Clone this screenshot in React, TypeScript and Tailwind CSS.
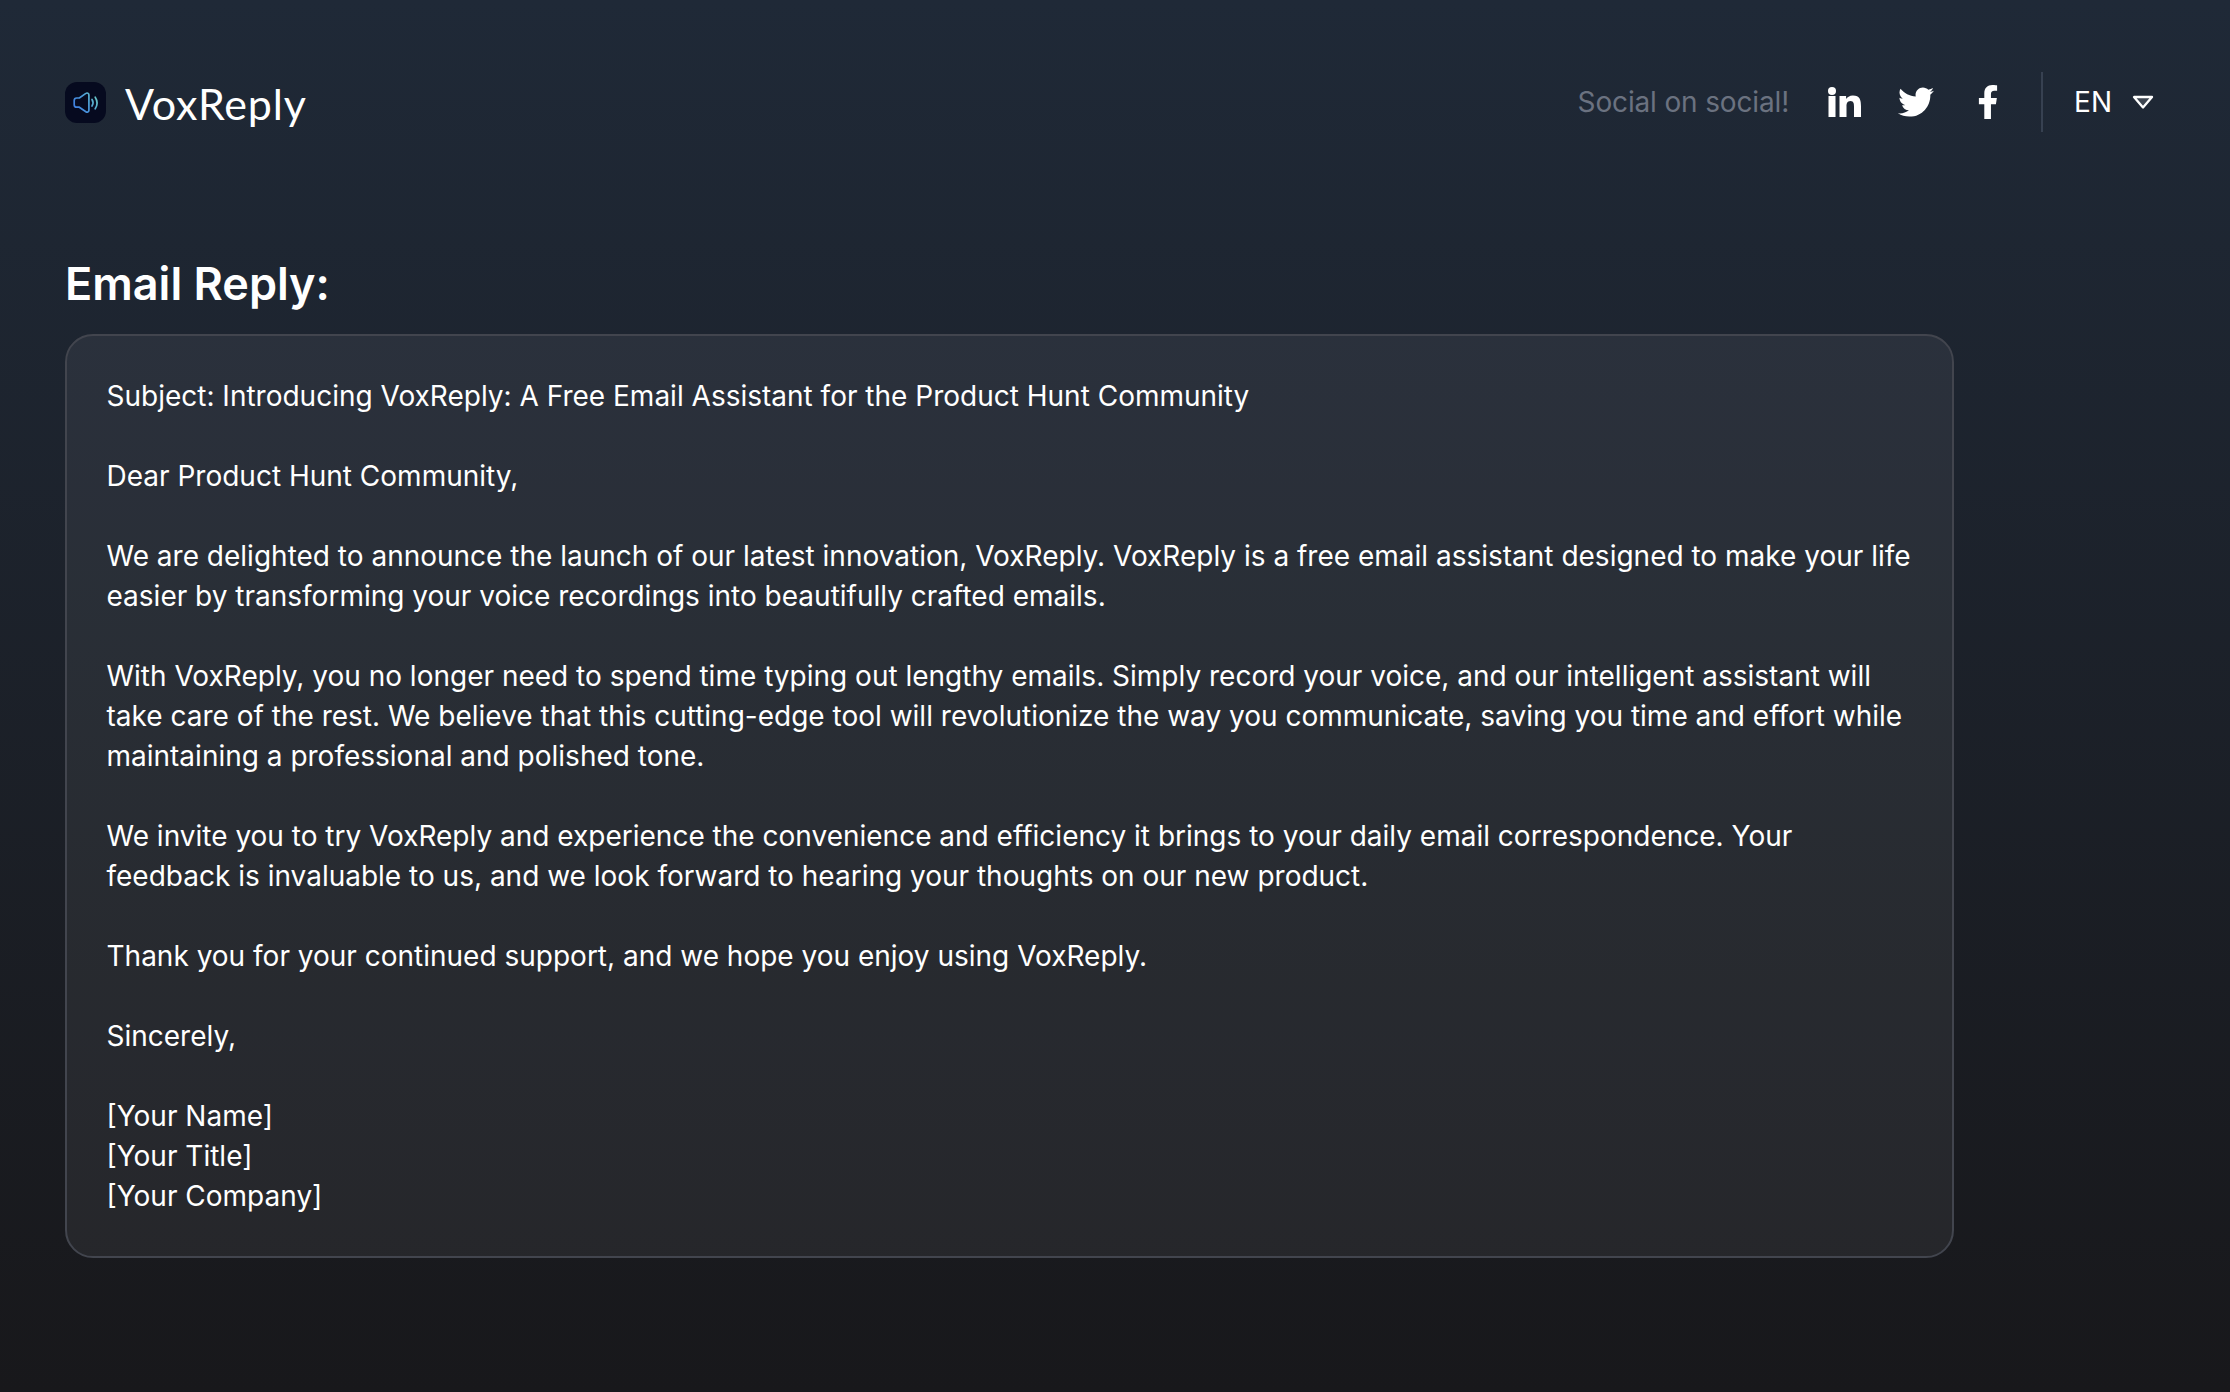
import { FaTwitter, FaFacebookF } from "react-icons/fa";

const paragraphs = `Subject: Introducing VoxReply: A Free Email Assistant for the Product Hunt Community

Dear Product Hunt Community,

We are delighted to announce the launch of our latest innovation, VoxReply. VoxReply is a free email assistant designed to make your life easier by transforming your voice recordings into beautifully crafted emails.

With VoxReply, you no longer need to spend time typing out lengthy emails. Simply record your voice, and our intelligent assistant will take care of the rest. We believe that this cutting-edge tool will revolutionize the way you communicate, saving you time and effort while maintaining a professional and polished tone.

We invite you to try VoxReply and experience the convenience and efficiency it brings to your daily email correspondence. Your feedback is invaluable to us, and we look forward to hearing your thoughts on our new product.

Thank you for your continued support, and we hope you enjoy using VoxReply.

Sincerely,

[Your Name]
[Your Title]
[Your Company]`;

function LogoMark() {
  return (
    <div className="flex h-[41px] w-[41px] items-center justify-center rounded-[12px] bg-[#060a1f]">
      <svg width="41" height="41" viewBox="0 0 41 41" fill="none">
        <defs>
          <linearGradient id="spk" x1="8" y1="28" x2="33" y2="14" gradientUnits="userSpaceOnUse">
            <stop offset="0" stopColor="#3d79e0" />
            <stop offset="0.55" stopColor="#4c9bd8" />
            <stop offset="1" stopColor="#6fd0c4" />
          </linearGradient>
        </defs>
        <path
          d="M9.2 18.5c0-1.5 1-2.5 2.5-2.5h2.6l6.6-4.6c1.2-.9 3-.2 3 1.5v15.4c0 1.7-1.8 2.4-3 1.5l-6.6-4.6h-2.6c-1.5 0-2.5-1-2.5-2.5z"
          stroke="url(#spk)"
          strokeWidth="1.7"
          strokeLinejoin="round"
        />
        <path d="M27 17.5c1.3 2 1.3 4.5 0 6.5" stroke="url(#spk)" strokeWidth="1.7" strokeLinecap="round" />
        <path d="M30.2 15.2c2.3 3.5 2.3 8 0 11.6" stroke="url(#spk)" strokeWidth="1.7" strokeLinecap="round" />
      </svg>
    </div>
  );
}

export default function App() {
  return (
    <div className="flex min-h-[1392px] flex-col bg-gradient-to-b from-[#1f2937] to-[#18181b] px-[65px] font-['Inter',sans-serif] text-white">
      <header className="mt-[72px] flex h-[60px] items-center justify-between pr-[10px]">
        <div className="flex items-center gap-[19px]">
          <LogoMark />
          <span className="mt-[4px] font-['Lato',sans-serif] text-[43px] leading-[60px] tracking-[0.8px]">VoxReply</span>
        </div>
        <div className="flex items-center">
          <span className="text-[28px] leading-[40px] tracking-[-0.15px] text-[#6b7280]">Social on social!</span>
          <svg className="ml-[39px]" width="33" height="30" viewBox="0 0 33 30" fill="white">
            <circle cx="4" cy="4" r="4" />
            <rect x="0.5" y="9" width="7" height="21" />
            <path d="M11.5 9h6.6v3c1-1.8 3.4-3.6 6.8-3.6 7.1 0 8.1 4.7 8.1 10.9V30h-7V19.8c0-2.7 0-5.9-3.5-5.9s-4 2.8-4 5.7V30h-7z" />
          </svg>
          <FaTwitter className="ml-[37px] h-[36px] w-[36px]" />
          <FaFacebookF className="ml-[43px] h-[34px] w-[22px]" />
          <div className="ml-[42px] h-[60px] w-[2px] bg-[#374151]" />
          <span className="ml-[31px] text-[28px] leading-[40px]">EN</span>
          <svg className="ml-[19px]" width="24" height="16" viewBox="0 0 24 16" fill="none">
            <path d="M3 3h18L12 13.5z" fill="#ffffff" fillOpacity="0.14" stroke="white" strokeWidth="2.3" strokeLinejoin="round" />
          </svg>
        </div>
      </header>
      <h1 className="mt-[117px] text-[45px] leading-[70px] font-semibold">Email Reply:</h1>
      <div className="mt-[15px] w-[1889px] rounded-[28px] border-2 border-[#42454e] bg-white/[0.06] py-[40px] pr-[30px] pl-[39.5px] text-[28px] leading-[40px] whitespace-pre-line">
        {paragraphs}
      </div>
    </div>
  );
}
